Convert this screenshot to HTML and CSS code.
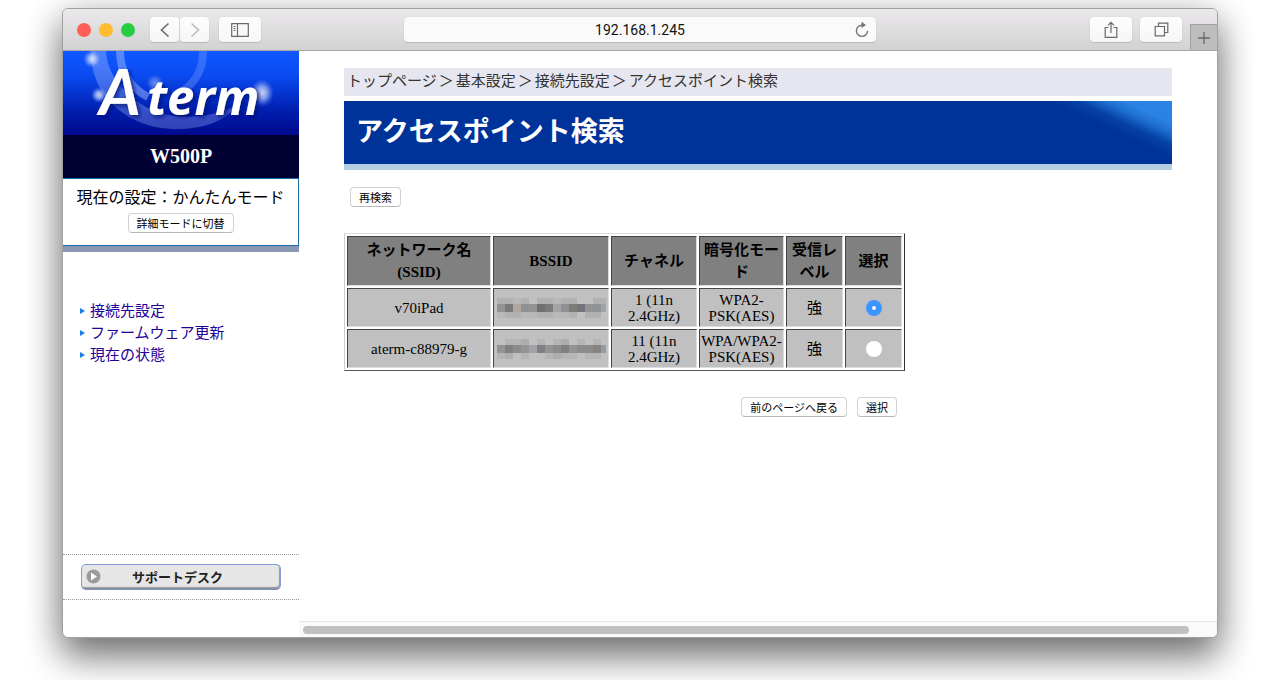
FILE: index.html
```html
<!DOCTYPE html>
<html lang="ja">
<head>
<meta charset="utf-8">
<title>アクセスポイント検索</title>
<link rel="stylesheet" href="styles.css">
</head>
<body>
<div class="window">
  <header class="toolbar">
    <div class="tools-left">
      <div class="lights"><span class="light red"></span><span class="light yellow"></span><span class="light green"></span></div>
      <div class="history">
        <button class="tool back" aria-label="戻る"><svg width="12" height="16" viewBox="0 0 12 16"><path d="M9.500 1.500 2.500 8l7 6.500" fill="none" stroke="#6a6a6a" stroke-width="1.600"/></svg></button>
        <button class="tool forward" aria-label="進む"><svg width="12" height="16" viewBox="0 0 12 16"><path d="M2.500 1.500 9.500 8l-7 6.500" fill="none" stroke="#bdbdbd" stroke-width="1.600"/></svg></button>
      </div>
      <button class="tool wide" aria-label="サイドバー"><svg width="18" height="14" viewBox="0 0 18 14" fill="none" stroke="#6a6a6a"><path d="M.7.700h16.600v12.600H.700zM6.500.700v12.600" stroke-width="1.200"/><path d="M2.500 3.500h2M2.500 5.500h2M2.500 7.500h2"/></svg></button>
    </div>
    <div class="address">
      <input type="text" value="192.168.1.245" aria-label="アドレス">
      <button class="reload" aria-label="再読み込み"><svg width="16" height="18" viewBox="0 0 16 18"><path d="M9 4.200H8a5.600 5.600 0 1 0 5.600 5.600" fill="none" stroke="#737373" stroke-width="1.400"/><path d="M7.500.800 12 4 7.500 7z" fill="#737373"/></svg></button>
    </div>
    <div class="tools-right">
      <button class="tool wide" aria-label="共有"><svg width="14" height="18" viewBox="0 0 14 18" fill="none" stroke="#6a6a6a" stroke-width="1.200"><path d="M4.500 6.500H1.200v9.900h11.600V6.500H9.500M7 12V1.500M4 4.300l3-3 3 3"/></svg></button>
      <button class="tool wide" aria-label="タブ一覧"><svg width="15" height="15" viewBox="0 0 15 15" fill="none" stroke="#6a6a6a" stroke-width="1.200"><path d="M1.200 4.500h9.300v9.300H1.200zM4.500 4V1.200h9.300v9.300H11"/></svg></button>
      <button class="new-tab" aria-label="新規タブ"><svg width="14" height="14" viewBox="0 0 14 14"><path d="M7 1v12M1 7h12" stroke="#666" stroke-width="1.300"/></svg></button>
    </div>
  </header>
  <div class="page">
    <aside class="sidebar">
      <svg class="logo" viewBox="0 0 236 84" role="img" aria-label="Aterm">
        <defs>
          <linearGradient id="sky" x2="0" y2="1"><stop stop-color="#1058ff"/><stop offset=".3" stop-color="#0a4af0"/><stop offset=".7" stop-color="#001fb0"/><stop offset="1" stop-color="#000a8e"/></linearGradient>
          <radialGradient id="glow"><stop stop-color="#fff" stop-opacity=".8"/><stop offset=".45" stop-color="#d5e0ff" stop-opacity=".6"/><stop offset="1" stop-color="#7a9cff" stop-opacity="0"/></radialGradient>
          <linearGradient id="ring" x2="0" y2="1"><stop stop-color="#8aaaff" stop-opacity=".5"/><stop offset="1" stop-color="#7c90e8" stop-opacity=".4"/></linearGradient>
          <filter id="shade" x="-10%" y="-20%" width="130%" height="150%"><feDropShadow dx="2" dy="2" stdDeviation="2" flood-color="#000a66" flood-opacity=".8"/></filter>
        </defs>
        <rect width="236" height="84" fill="url(#sky)"/>
        <path d="M28 0h15c1 26 24 52 54 62 24 7 52 4 76-7-10 15-32 23-60 23C66 78 27 45 28 0z" fill="url(#ring)"/>
        <path d="M57 0c0 22 11 37 28 46" fill="none" stroke="#9bb8ff" stroke-width="8" opacity=".5"/>
        <path d="M140 0c0 20-8 32-22 41" fill="none" stroke="#7ea2ff" stroke-width="8" opacity=".35"/>
        <circle cx="29" cy="8" r="9" fill="url(#glow)"/>
        <circle cx="36" cy="44" r="8" fill="url(#glow)"/>
        <circle cx="92" cy="32" r="9" fill="url(#glow)" opacity=".5"/>
        <ellipse cx="199" cy="42" rx="12" ry="14" fill="url(#glow)"/>
        <g class="logo-text" filter="url(#shade)"><text class="logo-cap" x="36" y="64" font-size="64">A</text><text x="84" y="64" font-size="49">term</text></g>
      </svg>
      <div class="model">W500P</div>
      <div class="mode">
        <p>現在の設定：かんたんモード</p>
        <button class="btn">詳細モードに切替</button>
      </div>
      <nav>
        <ul>
          <li><a href="#connect">接続先設定</a></li>
          <li><a href="#firmware">ファームウェア更新</a></li>
          <li><a href="#status">現在の状態</a></li>
        </ul>
      </nav>
      <div class="support">
        <a href="#support"><svg width="15" height="15" viewBox="0 0 15 15"><circle cx="7.500" cy="7.500" r="7" fill="#9b9b9b"/><path d="M5 3.500v8l6-4z" fill="#fff"/></svg><span>サポートデスク</span></a>
      </div>
    </aside>
    <main class="main">
      <div class="content">
        <div class="crumbs">トップページ<span>＞</span>基本設定<span>＞</span>接続先設定<span>＞</span>アクセスポイント検索</div>
        <h1>アクセスポイント検索</h1>
        <div class="rescan"><button class="btn">再検索</button></div>
        <div class="results">
          <table>
            <colgroup><col class="c-name"><col class="c-bssid"><col class="c-chan"><col class="c-enc"><col class="c-level"><col class="c-pick"></colgroup>
            <thead><tr><th>ネットワーク名<br>(SSID)</th><th>BSSID</th><th>チャネル</th><th>暗号化モード</th><th>受信レベル</th><th>選択</th></tr></thead>
            <tbody>
              <tr>
                <td>v70iPad</td>
                <td><svg class="mosaic" width="109" height="20" viewBox="0 0 109 20" shape-rendering="crispEdges">
                  <path fill="#b1b1b1" d="M0 0h16v6H0zM24 0h8v6h-8zM40 0h16v6H40zM64 0h16v6H64zM96 0h13v6H96zM8 14h16v6H8zM40 14h16v6H40zM72 14h8v6h-8zM88 14h16v6H88z"/>
                  <path fill="#b8b8b8" d="M16 0h8v6h-8zM56 0h8v6h-8zM0 14h8v6H0zM24 14h16v6H24zM56 14h16v6H56z"/>
                  <path fill="#939393" d="M0 6h8v8H0zM32 6h8v8h-8zM88 6h8v8h-8z"/><path fill="#7a7a7a" d="M8 6h8v8H8zM48 6h8v8h-8z"/><path fill="#afa8a2" d="M16 6h8v8h-8z"/><path fill="#8f9195" d="M24 6h8v8h-8zM64 6h8v8h-8zM96 6h8v8h-8z"/><path fill="#707070" d="M40 6h8v8h-8z"/><path fill="#a4a4a6" d="M56 6h8v8h-8z"/><path fill="#7e7c76" d="M72 6h8v8h-8z"/><path fill="#72767c" d="M80 6h8v8h-8z"/><path fill="#9da4a5" d="M104 6h5v8h-5z"/></svg></td>
                <td>1 (11n 2.4GHz)</td><td>WPA2-PSK(AES)</td><td>強</td>
                <td><input type="radio" name="ap" aria-label="v70iPad" checked></td>
              </tr>
              <tr>
                <td>aterm-c88979-g</td>
                <td><svg class="mosaic" width="109" height="20" viewBox="0 0 109 20" shape-rendering="crispEdges">
                  <path fill="#b5b5b5" d="M8 0h16v6H8zM40 0h8v6h-8zM56 0h8v6h-8zM80 0h8v6h-8zM96 0h8v6h-8zM0 14h8v6H0zM24 14h8v6h-8zM48 14h8v6h-8zM64 14h16v6H64zM88 14h16v6H88z"/>
                  <path fill="#adadad" d="M24 0h8v6h-8zM64 0h8v6h-8zM8 14h8v6H8zM56 14h8v6h-8z"/>
                  <path fill="#949494" d="M0 6h8v8H0zM24 6h8v8h-8zM48 6h8v8h-8zM72 6h8v8h-8z"/><path fill="#7f8082" d="M8 6h8v8H8zM40 6h8v8h-8zM64 6h8v8h-8z"/><path fill="#8b8b8b" d="M16 6h8v8h-8zM56 6h8v8h-8zM80 6h16v8H80z"/><path fill="#a1a3a6" d="M32 6h8v8h-8z"/><path fill="#898380" d="M96 6h8v8h-8z"/><path fill="#959c9f" d="M104 6h5v8h-5z"/></svg></td>
                <td>11 (11n 2.4GHz)</td><td>WPA/WPA2-PSK(AES)</td><td>強</td>
                <td><input type="radio" name="ap" aria-label="aterm-c88979-g"></td>
              </tr>
            </tbody>
          </table>
          <div class="actions"><button class="btn">前のページへ戻る</button><button class="btn">選択</button></div>
        </div>
      </div>
      <div class="scrollbar"><div class="thumb"></div></div>
    </main>
  </div>
</div>
</body>
</html>
```
FILE: styles.css
```css
* { box-sizing: border-box; }
body {
  margin: 0;
  min-height: 100vh;
  padding: 8px 62px 42px;
  display: flex;
  background: #fff;
  color: #000;
  font: 15px/22px "Liberation Serif", "Noto Sans CJK JP", serif;
  overflow: hidden;
}
button { font: inherit; padding: 0; cursor: pointer; }
svg { display: block; }
.window {
  flex: 1;
  min-width: 0;
  display: flex;
  flex-direction: column;
  border: 1px solid #a0a0a0;
  border-radius: 6px;
  overflow: hidden;
  background: #fff;
  box-shadow: 0 20px 36px rgba(0, 0, 0, .48), 0 4px 36px rgba(0, 0, 0, .2);
}

/* Browser toolbar */
.toolbar {
  display: grid;
  grid-template-columns: 1fr minmax(200px, 472px) 1fr;
  align-items: center;
  height: 42px;
  background: linear-gradient(#ebe9eb, #d3d2d3);
  border-bottom: 1px solid #a9a7a9;
}
.tools-left { display: flex; align-items: center; padding-left: 14px; }
.lights { display: flex; gap: 8px; margin-right: 15px; }
.light { width: 14px; height: 14px; border-radius: 50%; }
.red { background: #ff5f57; }
.yellow { background: #febc2e; }
.green { background: #28cd41; }
.history { display: flex; gap: 1px; margin-right: 10px; }
.tool {
  display: flex;
  align-items: center;
  justify-content: center;
  width: 29px;
  height: 25px;
  border: 0;
  border-radius: 4px;
  background: linear-gradient(#fdfdfd, #f6f6f6);
  box-shadow: 0 1px 1px #b9b8b9, 0 0 1px #c4c4c4;
}
.wide { width: 42px; }
.address {
  display: flex;
  align-items: center;
  height: 25px;
  padding: 0 6px 0 26px;
  border-radius: 4px;
  background: #fafafa;
  box-shadow: 0 1px 1px #b9b8b9, 0 0 1px #c4c4c4;
}
.address input {
  flex: 1;
  min-width: 0;
  border: 0;
  padding: 0;
  background: none;
  color: #111;
  font: 14px/20px Roboto, "Liberation Sans", sans-serif;
  text-align: center;
}
.reload { border: 0; background: none; width: 16px; margin-left: 4px; }
.tools-right {
  align-self: stretch;
  display: flex;
  justify-content: flex-end;
  align-items: center;
  gap: 8px;
}
.new-tab {
  display: flex;
  align-items: center;
  justify-content: center;
  align-self: flex-end;
  width: 27px;
  height: 26px;
  border: solid #a2a2a2;
  border-width: 1px 0 0 1px;
  background: #bebdbe;
}

/* Settings page */
.page { flex: 1; display: flex; min-height: 0; }
.sidebar { width: 236px; flex: none; display: flex; flex-direction: column; }
.logo { width: 100%; }
.logo-text { fill: #fff; font-family: "Open Sans", "Noto Sans", sans-serif; font-weight: 700; font-style: italic; }
.logo-cap { font-family: Lato, "Open Sans", sans-serif; }
.model {
  padding: 10px 0 11px;
  background: #000033;
  color: #fff;
  font-size: 20px;
  font-weight: 700;
  text-align: center;
}
.mode {
  padding: 8px 0 12px;
  border: solid #1b6fa8;
  border-width: 1px 1px 1px 0;
  font-size: 16px;
  text-align: center;
}
.mode p { margin: 0 0 4px; }
.btn {
  height: 20px;
  padding: 0 8px;
  border: 1px solid #d2d2d2;
  border-bottom-color: #b9b9b9;
  border-radius: 4px;
  background: #fff;
  color: #000;
  font: 11px/16px "Noto Sans CJK JP", sans-serif;
  white-space: nowrap;
}
.mode .btn { display: block; margin: 0 auto; }
nav { border-top: 6px solid #8b98b3; padding-top: 48px; }
nav ul { list-style: none; margin: 0; padding: 0 0 0 17px; }
nav li { display: flex; align-items: center; gap: 5px; height: 22px; }
nav li::before {
  content: "";
  border: solid transparent;
  border-width: 3px 0 3px 5px;
  border-left-color: #1c7be6;
}
nav a { color: #220099; text-decoration: none; }
.support {
  margin: auto 0 37px;
  padding: 9px 18px;
  border: dotted #999;
  border-width: 1px 0;
}
.support a {
  display: flex;
  align-items: center;
  height: 26px;
  padding: 0 4px;
  border: 1px solid #7d9fd3;
  border-bottom: 2px solid #808faa;
  border-radius: 5px;
  background: #e6e6e6;
  box-shadow: inset -1px -1px 1px #999;
  color: #222;
  font: 700 13px/20px "Noto Sans CJK JP", sans-serif;
  text-decoration: none;
}
.support span { flex: 1; padding-right: 22px; text-align: center; }

.main { flex: 1; min-width: 0; display: flex; flex-direction: column; }
.content { flex: 1; padding: 17px 45px; }
.crumbs {
  padding: 2px 3px 4px;
  background: #e6e6f0;
  color: #333;
}
.crumbs span { margin: 0 2px; }
h1 {
  margin: 5px 0 17px;
  padding: 12px;
  border-bottom: 6px solid #b5cde0;
  background:
    linear-gradient(25deg, transparent 54%, rgba(10, 80, 180, .5) 64%, #1e6fd0 74%, #2a82e2 82%) top right / 130px 63px no-repeat,
    #003399;
  color: #fff;
  font-size: 27px;
  line-height: 39px;
}
.rescan { padding-left: 6px; }
.rescan .btn, .actions .btn { display: block; }
.results { width: 561px; max-width: 100%; margin-top: 26px; }
table {
  width: 100%;
  table-layout: fixed;
  border: 1px solid;
  border-color: #ddd #333 #555 #ccc;
  border-spacing: 2px;
  text-align: center;
}
th, td {
  padding: 1px;
  border: 1px solid;
  border-color: #444 #ddd #ddd #444;
}
th { background: #808080; height: 50px; }
td { background: #c0c0c0; height: 39px; line-height: 16px; }
.c-name { width: 144px; }
.c-bssid { width: 116px; }
.c-chan { width: 86px; }
.c-enc { width: 85px; }
.c-level { width: 57px; }
.mosaic { margin: 0 auto; }
input[type="radio"] {
  appearance: none;
  display: block;
  width: 16px;
  height: 16px;
  margin: 0 auto;
  border-radius: 50%;
  background: #fff;
}
input[type="radio"]:checked { border: 6px solid #3b95ff; }
.actions { display: flex; justify-content: flex-end; gap: 10px; padding: 26px 8px 0 0; }
.scrollbar { height: 16px; padding: 4px 28px 3px 4px; border-top: 1px solid #e6e6e6; background: #fafafa; }
.thumb { height: 8px; border-radius: 4px; background: #c0c0c0; }
```
